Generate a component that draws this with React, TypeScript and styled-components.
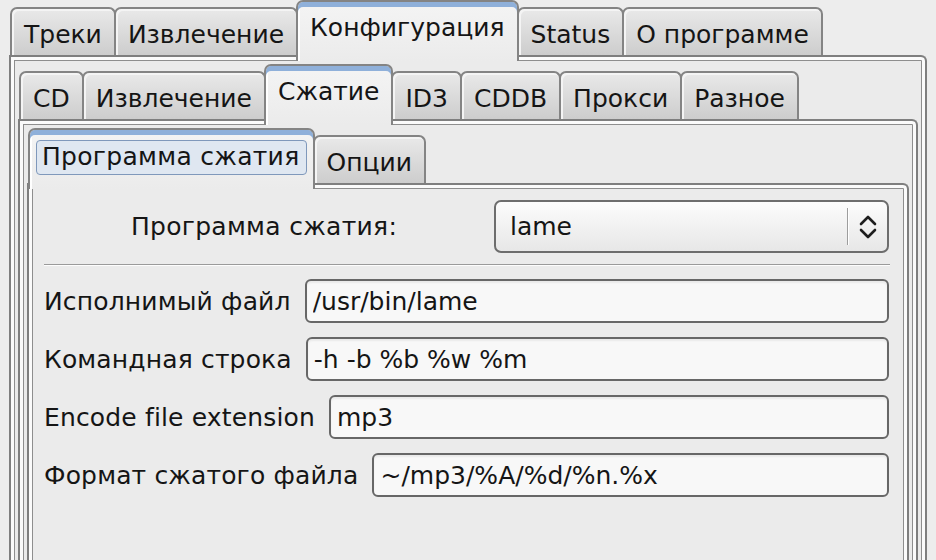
import React from "react";
import styled, { createGlobalStyle } from "styled-components";

const GlobalStyle = createGlobalStyle`
    html, body {
        margin: 0;
        padding: 0;
        overflow: hidden;
        background: #ededed;
    }
    body {
        font-family: "DejaVu Sans", "Liberation Sans", sans-serif;
        color: #151515;
    }
`;

type NotebookProps = {
    tabs: string[];
    active: number;
    focused?: boolean;
    children?: React.ReactNode;
};

function Notebook({ tabs, active, focused, children }: NotebookProps) {
    return (
        <Book>
            <TabRow>
                {
                    tabs.map((tab, i) => (
                        <Tab key={tab} $active={i === active} $focused={focused && i === active}>
                            {focused && i === active ? <FocusLabel>{tab}</FocusLabel> : tab}
                        </Tab>
                    ))
                }
            </TabRow>
            <Page>{children}</Page>
        </Book>
    );
}

function Arrows() {
    return (
        <svg width="20" height="28" viewBox="0 0 20 28">
            <polyline points="3,11 10,4 17,11" fill="none" stroke="#1e1e1e" strokeWidth="2.6" strokeLinecap="round" strokeLinejoin="round" />
            <polyline points="3,17 10,24 17,17" fill="none" stroke="#1e1e1e" strokeWidth="2.6" strokeLinecap="round" strokeLinejoin="round" />
        </svg>
    );
}

const fields = [
    { label: "Исполнимый файл", value: "/usr/bin/lame" },
    { label: "Командная строка", value: "-h -b %b %w %m" },
    { label: "Encode file extension", value: "mp3" },
    { label: "Формат сжатого файла", value: "~/mp3/%A/%d/%n.%x" },
];

export default function App() {
    return (
        <>
            <GlobalStyle />
            <Window>
                <Notebook tabs={["Треки", "Извлечение", "Конфигурация", "Status", "О программе"]} active={2}>
                    <Notebook tabs={["CD", "Извлечение", "Сжатие", "ID3", "CDDB", "Прокси", "Разное"]} active={2}>
                        <Notebook tabs={["Программа сжатия", "Опции"]} active={0} focused>
                            <Content>
                                <ProgramRow>
                                    <CenterLabel>Программа сжатия:</CenterLabel>
                                    <Combo>
                                        <ComboValue>lame</ComboValue>
                                        <ComboDivider />
                                        <ComboArrow><Arrows /></ComboArrow>
                                    </Combo>
                                </ProgramRow>
                                <Separator />
                                {
                                    fields.map((f) => (
                                        <FieldRow key={f.label}>
                                            <FieldLabel>{f.label}</FieldLabel>
                                            <Entry readOnly value={f.value} />
                                        </FieldRow>
                                    ))
                                }
                            </Content>
                        </Notebook>
                    </Notebook>
                </Notebook>
            </Window>
        </>
    );
}

const Window = styled.div`
    height: 620px;
    padding: 0 9px 0 9px;
    display: flex;
    flex-direction: column;
`;

const Book = styled.div`
    flex: 1;
    display: flex;
    flex-direction: column;
`;

const TabRow = styled.div`
    display: flex;
    align-items: flex-end;
    margin-bottom: -6px;
    padding-left: 1px;
    position: relative;
    z-index: 1;
`;

const Tab = styled.div<{ $active?: boolean; $focused?: boolean }>`
    box-sizing: border-box;
    height: ${(p) => (p.$active ? 61 : 48)}px;
    margin-bottom: ${(p) => (p.$active ? 0 : 6)}px;
    margin-right: -2px;
    padding: ${(p) => (p.$focused ? "10px 6px 0" : "11px 12px 0")};
    border: 2px solid #848484;
    border-bottom: none;
    border-radius: 7px 7px 0 0;
    background: ${(p) => (p.$active ? "linear-gradient(#f4f4f4, #ebebeb)" : "linear-gradient(#e9e9e9, #cdcdcd)")};
    box-shadow: ${(p) => (p.$active ? "inset 0 5px 0 #8fb0da, inset 2px 0 0 #fff" : "inset 2px 2px 0 #f4f4f4")};
    font-size: 25px;
    line-height: 29px;
    white-space: nowrap;
    position: relative;
    z-index: ${(p) => (p.$active ? 2 : 1)};
`;

const FocusLabel = styled.span`
    display: inline-block;
    padding: 1px 6px 3px 5px;
    border: 1px solid #7f98bb;
    border-radius: 4px;
    background: #dfe7f1;
    letter-spacing: 0.3px;
`;

const Page = styled.div`
    flex: 1;
    display: flex;
    flex-direction: column;
    padding: 7px 7px 0;
    border: 2px solid #7f7f7f;
    border-bottom: none;
    border-radius: 0 6px 0 0;
    background: #ebebeb;
    box-shadow: inset 0 0 0 3px #fbfbfb, inset 0 0 0 4px #8e8e8e;
`;

const Content = styled.div`
    display: flex;
    flex-direction: column;
    padding: 8px 11px 0 8px;
`;

const ProgramRow = styled.div`
    display: grid;
    grid-template-columns: 1fr 395px;
    gap: 10px;
    align-items: center;
`;

const CenterLabel = styled.div`
    text-align: center;
    font-size: 25px;
    letter-spacing: 0.3px;
`;

const Combo = styled.div`
    box-sizing: border-box;
    height: 53px;
    display: flex;
    align-items: center;
    padding-left: 14px;
    border: 2px solid #6d6d6d;
    border-radius: 7px;
    background: linear-gradient(#fcfcfc, #e7e7e7);
    font-size: 25px;
`;

const ComboValue = styled.span`
    flex: 1;
`;

const ComboDivider = styled.span`
    width: 1px;
    height: 37px;
    background: #9d9d9d;
    border-right: 1px solid #fff;
`;

const ComboArrow = styled.span`
    width: 38px;
    display: flex;
    justify-content: center;
    align-items: center;
`;

const Separator = styled.div`
    margin: 11px -1px 13px 0;
    border-top: 1px solid #9a9a9a;
    border-bottom: 1px solid #fdfdfd;
`;

const FieldRow = styled.div`
    display: flex;
    align-items: center;
    gap: 14px;
    margin-bottom: 14px;
`;

const FieldLabel = styled.span`
    font-size: 25px;
    letter-spacing: 0.15px;
    white-space: nowrap;
`;

const Entry = styled.input`
    flex: 1;
    min-width: 0;
    box-sizing: border-box;
    height: 44px;
    padding: 0 6px;
    border: 2px solid #676767;
    border-radius: 6px;
    background: #f8f8f8;
    box-shadow: inset 0 2px 2px rgba(0, 0, 0, 0.06);
    font: inherit;
    font-size: 25px;
    color: #151515;
    outline: none;
`;
